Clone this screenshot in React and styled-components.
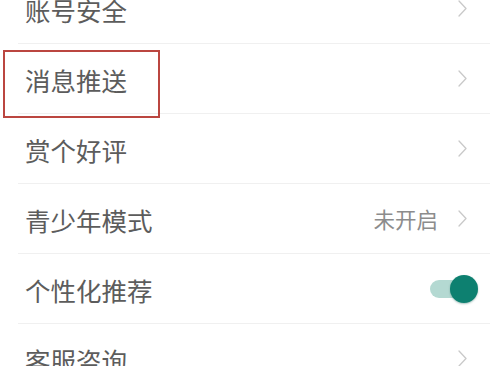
import React from "react";
import styled, { createGlobalStyle } from "styled-components";

const Global = createGlobalStyle`
  html, body { margin: 0; padding: 0; background: #fff; overflow: hidden; }
  body { font-family: "Noto Sans CJK SC", "Noto Sans", sans-serif; }
`;

const Page = styled.div`
  width: 490px;
  height: 366px;
  overflow: hidden;
  background: #fff;
`;

const List = styled.div`
  margin-top: -26px;
  display: flex;
  flex-direction: column;
`;

const Row = styled.div`
  position: relative;
  height: 69px;
  margin-left: 18px;
  padding-left: 7px;
  padding-right: ${(p) => (p.$toggle ? "12px" : "23px")};
  border-bottom: 1px solid #f0f0f0;
  display: flex;
  align-items: center;
  justify-content: space-between;
`;

const Label = styled.span`
  font-size: 25.5px;
  color: #5c5c5c;
  line-height: 1;
  padding-top: 2px;
`;

const Right = styled.div`
  display: flex;
  align-items: center;
  gap: 20px;
`;

const Value = styled.span`
  font-size: 21.5px;
  color: #8c8c8c;
  line-height: 1;
`;

const Highlight = styled.div`
  position: absolute;
  left: -15px;
  top: 6px;
  width: 153px;
  height: 64px;
  border: 2px solid #bb4640;
  pointer-events: none;
`;

const Track = styled.div`
  position: relative;
  width: 40px;
  height: 18px;
  border-radius: 9px;
  background: #b4d9d2;
  margin-right: 8px;
`;

const Knob = styled.div`
  position: absolute;
  right: -8px;
  top: -5px;
  width: 28px;
  height: 28px;
  border-radius: 50%;
  background: #0d8070;
  box-shadow: 0 1px 2px rgba(0, 80, 70, 0.35);
`;

const Chevron = () => (
  <svg width="9" height="17" viewBox="0 0 9 17">
    <polyline
      points="1,1 8,8.5 1,16"
      fill="none"
      stroke="#c9c9c9"
      strokeWidth="1.3"
      strokeLinecap="round"
      strokeLinejoin="round"
    />
  </svg>
);

const items = [
  { label: "账号安全" },
  { label: "消息推送", highlight: true },
  { label: "赏个好评" },
  { label: "青少年模式", value: "未开启" },
  { label: "个性化推荐", toggle: true },
  { label: "客服咨询" },
];

export default function App() {
  return (
    <Page>
      <Global />
      <List>
        {items.map((it) => (
          <Row key={it.label} $toggle={it.toggle}>
            {it.highlight && <Highlight />}
            <Label>{it.label}</Label>
            {it.toggle ? (
              <Track>
                <Knob />
              </Track>
            ) : (
              <Right>
                {it.value && <Value>{it.value}</Value>}
                <Chevron />
              </Right>
            )}
          </Row>
        ))}
      </List>
    </Page>
  );
}
